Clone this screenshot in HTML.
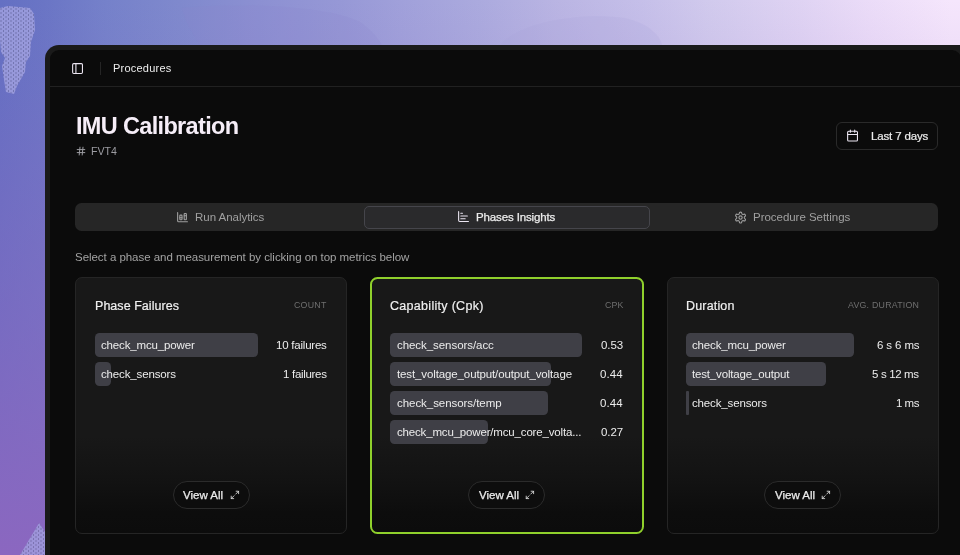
<!DOCTYPE html>
<html>
<head>
<meta charset="utf-8">
<style>
*{box-sizing:border-box;margin:0;padding:0}
html,body{width:960px;height:555px;overflow:hidden}
body{font-family:"Liberation Sans",sans-serif;position:relative;color:#ededed;
background:
 linear-gradient(to bottom, rgba(139,103,192,0) 0%, rgba(139,103,192,.08) 12%, rgba(139,103,192,.53) 59%, rgba(139,103,192,1) 100%),
 linear-gradient(to right,#6470c3 0%,#6a75c5 4.6%,#7581ca 11%,#7f89cd 18.7%,#8c90d2 27%,#9698d6 35.4%,#a0a0da 41.7%,#abaade 50%,#bab5e3 58.3%,#c5bfe9 66.7%,#d1caed 74%,#dfd3f3 83.3%,#ebdcf8 90.6%,#f5e6fc 99%);}
.abs{position:absolute}
.frame{left:45px;top:45px;width:930px;height:530px;background:#1a1a1a;border-radius:14px}
.app{left:50px;top:50px;width:911px;height:520px;background:#0b0b0b;border-radius:9px}
.hdrline{left:50px;top:86px;width:911px;height:1px;background:#212121}
.t,.lbl,.val,.cap,.ctitle{will-change:transform}
.t{position:absolute;white-space:nowrap;line-height:1}
.card{position:absolute;top:277px;width:272px;height:257px;border:1px solid #252525;border-radius:7px;
 background:linear-gradient(to bottom,#181818 0%,#181818 62%,#131313 78%,#0d0d0d 92%,#0c0c0c 100%)}
.bar{position:absolute;height:24.5px;background:#3f3f46;border-radius:4.5px;margin-top:-.5px}
.lbl{position:absolute;white-space:nowrap;line-height:1;font-size:11.5px;color:#ececec}
.val{position:absolute;white-space:nowrap;line-height:1;font-size:11.5px;color:#ececec;text-align:right}
.cap{position:absolute;white-space:nowrap;line-height:1;font-size:8.8px;color:#6f6f6f;letter-spacing:.3px;text-align:right}
.ctitle{position:absolute;white-space:nowrap;line-height:1;font-size:12.5px;color:#f0f0f0;-webkit-text-stroke:.2px #f0f0f0}
.pill{position:absolute;top:203px;width:77px;height:28px;border:1px solid #2b2b2b;border-radius:14px;background:#0d0d0d}
.exp{position:absolute;width:9.84px;height:9.84px;top:212px}
.va{-webkit-text-stroke:.25px #ececec}
</style>
</head>
<body>
<!-- background decorations -->
<svg class="abs" style="left:0;top:0" width="960" height="555" viewBox="0 0 960 555">
  <defs>
    <pattern id="dots" width="5" height="4" patternUnits="userSpaceOnUse">
      <rect x="0" y="0" width="5" height="4" fill="#a2a2e0"/>
      <rect x="0.5" y="0.5" width="1" height="1" fill="#4c4c78"/>
      <rect x="3" y="2.5" width="1" height="1" fill="#4c4c78"/>
    </pattern>
  </defs>
  <path d="M182 8 C240 2 330 6 360 22 C375 32 380 42 382 45 L200 45 C190 30 185 20 182 8 Z" fill="#8d86cf" opacity=".18"/>
  <path d="M500 45 C520 22 580 12 625 18 C650 24 660 36 662 45 Z" fill="#a99fd6" opacity=".18"/>
  <path d="M0 8 L8 6 L30 8 L34 14 L35 30 L31 42 L30 56 L26 62 L25 72 L17 86 L14 94 L6 92 L4 80 L2 66 L5 58 L1 52 L0 40 Z" fill="url(#dots)" opacity=".8"/>
  <path d="M20 555 L39 523 L45 532 L45 555 Z" fill="url(#dots)" opacity=".75"/>
</svg>

<div class="abs frame"></div>
<div class="abs app"></div>
<div class="abs hdrline"></div>

<!-- header -->
<svg class="abs" style="left:70.56px;top:61.8px" width="13.1" height="13.1" viewBox="0 0 24 24" fill="none" stroke-width="2" stroke-linecap="round" stroke-linejoin="round" stroke="#ece6f2"><rect width="18" height="18" x="3" y="3" rx="2"/><path d="M9 3v18"/></svg>
<div class="abs" style="left:100px;top:62px;width:1px;height:12.5px;background:#252525"></div>
<div class="t" id="proc" style="left:113px;top:63px;font-size:11px;color:#ededed;letter-spacing:.22px">Procedures</div>

<!-- title -->
<div class="t" id="title" style="left:76px;top:115px;font-size:23.5px;font-weight:bold;color:#f6eef8;letter-spacing:-.66px">IMU Calibration</div>
<svg class="abs" style="left:76px;top:146px" width="10" height="10" viewBox="0 0 10 10" fill="none" stroke="#9c9ca2" stroke-width="1" stroke-linecap="round">
  <line x1="1.2" y1="3.6" x2="8.8" y2="3.6"/><line x1="1.2" y1="6.6" x2="8.8" y2="6.6"/>
  <line x1="4" y1="1.2" x2="3.2" y2="9"/><line x1="7" y1="1.2" x2="6.2" y2="9"/>
</svg>
<div class="t" id="fvt" style="left:91px;top:146px;font-size:10.6px;color:#9c9ca2;letter-spacing:0px">FVT4</div>

<!-- date button -->
<div class="abs" style="left:836px;top:122px;width:102px;height:28px;border:1px solid #2a2a2a;border-radius:6px"></div>
<svg class="abs" style="left:845.8px;top:129.4px" width="13.1" height="13.1" viewBox="0 0 24 24" fill="none" stroke-width="2" stroke-linecap="round" stroke-linejoin="round" stroke="#ece6f2"><path d="M8 2v4"/><path d="M16 2v4"/><rect width="18" height="18" x="3" y="4" rx="2"/><path d="M3 10h18"/></svg>
<div class="t" id="last7" style="left:871px;top:131px;-webkit-text-stroke:.2px #ededed;font-size:11.5px;color:#ededed;letter-spacing:-.15px">Last 7 days</div>

<!-- tabs -->
<div class="abs" style="left:75.3px;top:203px;width:862.7px;height:27.7px;background:#262626;border-radius:6.5px"></div>
<div class="abs" style="left:364px;top:206px;width:286px;height:22.5px;background:#2a2a2c;border:1px solid #45454b;border-radius:5px"></div>

<svg class="abs" style="left:175.56px;top:210.9px" width="13.1" height="12.4" preserveAspectRatio="none" viewBox="0 0 24 24" fill="none" stroke-width="2" stroke-linecap="round" stroke-linejoin="round" stroke="#a0a0a0"><path d="M11 13H7"/><path d="M19 9h-4"/><path d="M3 3v16a2 2 0 0 0 2 2h16"/><rect x="15" y="5" width="4" height="12" rx="1"/><rect x="7" y="8" width="4" height="9" rx="1"/></svg>
<div class="t" id="tab1" style="left:195px;top:212px;font-size:11.5px;color:#a0a0a0;letter-spacing:-.03px">Run Analytics</div>

<svg class="abs" style="left:457.36px;top:210.3px" width="13.1" height="13.1" viewBox="0 0 24 24" fill="none" stroke-width="2" stroke-linecap="round" stroke-linejoin="round" stroke="#ece6f2"><path d="M3 3v16a2 2 0 0 0 2 2h16"/><path d="M7 16h8"/><path d="M7 11h12"/><path d="M7 6h3"/></svg>
<div class="t" id="tab2" style="left:476px;top:212px;-webkit-text-stroke:.25px #ededed;font-size:11.5px;color:#ededed;letter-spacing:-.13px">Phases Insights</div>

<svg class="abs" style="left:734.1px;top:210.55px" width="13.1" height="13.1" viewBox="0 0 24 24" fill="none" stroke="#a0a0a0" stroke-width="2" stroke-linecap="round" stroke-linejoin="round">
  <path d="M12.22 2h-.44a2 2 0 0 0-2 2v.18a2 2 0 0 1-1 1.73l-.43.25a2 2 0 0 1-2 0l-.15-.08a2 2 0 0 0-2.73.73l-.22.38a2 2 0 0 0 .73 2.73l.15.1a2 2 0 0 1 1 1.72v.51a2 2 0 0 1-1 1.74l-.15.09a2 2 0 0 0-.73 2.73l.22.38a2 2 0 0 0 2.73.73l.15-.08a2 2 0 0 1 2 0l.43.25a2 2 0 0 1 1 1.73V20a2 2 0 0 0 2 2h.44a2 2 0 0 0 2-2v-.18a2 2 0 0 1 1-1.73l.43-.25a2 2 0 0 1 2 0l.15.08a2 2 0 0 0 2.73-.73l.22-.39a2 2 0 0 0-.73-2.73l-.15-.08a2 2 0 0 1-1-1.74v-.5a2 2 0 0 1 1-1.74l.15-.09a2 2 0 0 0 .73-2.73l-.22-.38a2 2 0 0 0-2.73-.73l-.15.08a2 2 0 0 1-2 0l-.43-.25a2 2 0 0 1-1-1.73V4a2 2 0 0 0-2-2z"/>
  <circle cx="12" cy="12" r="3"/>
</svg>
<div class="t" id="tab3" style="left:753px;top:212px;font-size:11.5px;color:#a0a0a0;letter-spacing:-.03px">Procedure Settings</div>

<div class="t" id="sub" style="left:75px;top:252px;font-size:11.5px;color:#a3a3a3;letter-spacing:-.04px">Select a phase and measurement by clicking on top metrics below</div>

<!-- card 1 -->
<div class="card" style="left:75px">
  <div class="ctitle" id="c1t" style="left:18.5px;top:22px;letter-spacing:.04px">Phase Failures</div>
  <div class="cap" style="right:19px;top:23px;letter-spacing:.26px">COUNT</div>
  <div class="bar" style="left:19px;top:55px;width:163px"></div>
  <div class="lbl" id="c1l1" style="left:24.6px;top:62px;letter-spacing:-.15px">check_mcu_power</div>
  <div class="val" style="right:19px;top:62px;letter-spacing:-.22px">10 failures</div>
  <div class="bar" style="left:19px;top:84px;width:16px"></div>
  <div class="lbl" style="left:24.6px;top:91px;letter-spacing:-.15px">check_sensors</div>
  <div class="val" style="right:19px;top:91px;letter-spacing:-.3px">1 failures</div>
  <div class="pill" style="left:96.6px"></div>
  <div class="lbl va" style="left:106.8px;top:212px">View All</div>
  <svg class="exp" style="left:153.9px" viewBox="0 0 24 24" fill="none" stroke="#e8e8e8" stroke-width="2" stroke-linecap="round" stroke-linejoin="round"><path d="M15 3h6v6"/><path d="M9 21H3v-6"/><path d="M21 3l-7 7"/><path d="M3 21l7-7"/></svg>
</div>

<!-- card 2 -->
<div class="card" style="left:370px;width:274px;border:2px solid #8fd02c;top:277px;height:257px;border-radius:7.5px">
  <div class="ctitle" id="c2t" style="left:18.1px;top:21px;letter-spacing:.3px">Capability (Cpk)</div>
  <div class="cap" style="right:19px;top:22px;letter-spacing:.11px">CPK</div>
  <div class="bar" style="left:18px;top:54px;width:191.5px"></div>
  <div class="lbl" style="left:24.5px;top:61px;letter-spacing:-.06px">check_sensors/acc</div>
  <div class="val" style="right:19px;top:61px;letter-spacing:-.1px">0.53</div>
  <div class="bar" style="left:18px;top:83px;width:161px"></div>
  <div class="lbl" id="c2l2" style="left:24.5px;top:90px;letter-spacing:-.12px">test_voltage_output/output_voltage</div>
  <div class="val" style="right:19px;top:90px;letter-spacing:.1px">0.44</div>
  <div class="bar" style="left:18px;top:112px;width:158px"></div>
  <div class="lbl" style="left:24.5px;top:119px;letter-spacing:-.05px">check_sensors/temp</div>
  <div class="val" style="right:19px;top:119px;letter-spacing:.1px">0.44</div>
  <div class="bar" style="left:18px;top:141px;width:97.5px"></div>
  <div class="lbl" style="left:24.5px;top:148px;letter-spacing:-.17px">check_mcu_power/mcu_core_volta...</div>
  <div class="val" style="right:19px;top:148px;letter-spacing:-.1px">0.27</div>
  <div class="pill" style="left:96.3px;top:202px"></div>
  <div class="lbl va" style="left:107px;top:211px">View All</div>
  <svg class="exp" style="top:211px;left:153.2px" viewBox="0 0 24 24" fill="none" stroke="#e8e8e8" stroke-width="2" stroke-linecap="round" stroke-linejoin="round"><path d="M15 3h6v6"/><path d="M9 21H3v-6"/><path d="M21 3l-7 7"/><path d="M3 21l7-7"/></svg>
</div>

<!-- card 3 -->
<div class="card" style="left:667px">
  <div class="ctitle" id="c3t" style="left:17.9px;top:22px;letter-spacing:.17px">Duration</div>
  <div class="cap" style="right:19px;top:23px;letter-spacing:.23px">AVG. DURATION</div>
  <div class="bar" style="left:18px;top:55px;width:168px"></div>
  <div class="lbl" style="left:24px;top:62px;letter-spacing:-.15px">check_mcu_power</div>
  <div class="val" style="right:19px;top:62px;letter-spacing:-.12px">6 s 6 ms</div>
  <div class="bar" style="left:18px;top:84px;width:140px"></div>
  <div class="lbl" style="left:24px;top:91px;letter-spacing:-.17px">test_voltage_output</div>
  <div class="val" style="right:19px;top:91px;letter-spacing:-.35px">5 s 12 ms</div>
  <div class="bar" style="left:18px;top:113px;width:3px;border-radius:1px"></div>
  <div class="lbl" style="left:24px;top:120px;letter-spacing:-.15px">check_sensors</div>
  <div class="val" style="right:19px;top:120px;letter-spacing:-.5px">1 ms</div>
  <div class="pill" style="left:96px"></div>
  <div class="lbl va" style="left:106.5px;top:212px">View All</div>
  <svg class="exp" style="left:153.3px" viewBox="0 0 24 24" fill="none" stroke="#e8e8e8" stroke-width="2" stroke-linecap="round" stroke-linejoin="round"><path d="M15 3h6v6"/><path d="M9 21H3v-6"/><path d="M21 3l-7 7"/><path d="M3 21l7-7"/></svg>
</div>

</body>
</html>
